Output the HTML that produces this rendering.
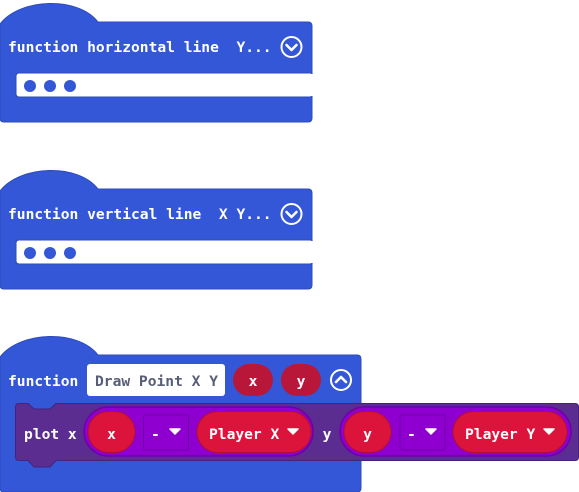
<!DOCTYPE html>
<html><head><meta charset="utf-8"><style>
html,body{margin:0;padding:0;background:#fff;width:579px;height:492px;overflow:hidden}
svg text{font-family:"DejaVu Sans Mono","Liberation Mono",monospace;font-weight:bold;font-size:14.6px;white-space:pre}
</style></head><body>
<svg width="579" height="492" viewBox="0 0 579 492" xmlns="http://www.w3.org/2000/svg" xml:space="preserve">
<path d="M0,24 C20,-2 78,-4 98,22 L308,22 Q312,22 312,26 L312,118 Q312,122 308,122 L4,122 Q0,122 0,118 Z" fill="#3357d6" stroke="#2c4bb9" stroke-width="1"/>
<rect x="16" y="73" width="297" height="24" rx="3" fill="#fff" stroke="#2c4bb9" stroke-width="1"/>
<rect x="305" y="74" width="9" height="22" fill="#fff"/>
<circle cx="30" cy="86" r="6" fill="#3357d6"/><circle cx="50" cy="86" r="6" fill="#3357d6"/><circle cx="70" cy="86" r="6" fill="#3357d6"/>
<text x="8" y="52" fill="#fff">function horizontal line  Y...</text>
<circle cx="291.5" cy="47" r="10" fill="none" stroke="#fff" stroke-width="2"/>
<path d="M286.5,45 L291.5,50 L296.5,45" fill="none" stroke="#fff" stroke-width="2.6" stroke-linecap="round" stroke-linejoin="round"/>

<path d="M0,191 C20,165 78,163 98,189 L308,189 Q312,189 312,193 L312,285 Q312,289 308,289 L4,289 Q0,289 0,285 Z" fill="#3357d6" stroke="#2c4bb9" stroke-width="1"/>
<rect x="16" y="240" width="297" height="24" rx="3" fill="#fff" stroke="#2c4bb9" stroke-width="1"/>
<rect x="305" y="241" width="9" height="22" fill="#fff"/>
<circle cx="30" cy="253" r="6" fill="#3357d6"/><circle cx="50" cy="253" r="6" fill="#3357d6"/><circle cx="70" cy="253" r="6" fill="#3357d6"/>
<text x="8" y="219" fill="#fff">function vertical line  X Y...</text>
<circle cx="291.5" cy="214" r="10" fill="none" stroke="#fff" stroke-width="2"/>
<path d="M286.5,212 L291.5,217 L296.5,212" fill="none" stroke="#fff" stroke-width="2.6" stroke-linecap="round" stroke-linejoin="round"/>

<path d="M0,357 C20,331 78,329 98,355 L357,355 Q361,355 361,359 L361,488 Q361,492 357,492 L4,492 Q0,492 0,488 Z" fill="#3357d6" stroke="#2c4bb9" stroke-width="1"/>
<text x="8" y="386" fill="#fff">function</text>
<rect x="87" y="364" width="138" height="32" rx="3" fill="#fff"/>
<text x="95" y="386" fill="#575e75">Draw Point X Y</text>
<rect x="233" y="364" width="40" height="32" rx="16" fill="#b8173a"/>
<text x="253" y="386" fill="#fff" text-anchor="middle">x</text>
<rect x="281" y="364" width="40" height="32" rx="16" fill="#b8173a"/>
<text x="301" y="386" fill="#fff" text-anchor="middle">y</text>
<circle cx="341" cy="380" r="10" fill="none" stroke="#fff" stroke-width="2"/>
<path d="M336,382 L341,377 L346,382" fill="none" stroke="#fff" stroke-width="2.6" stroke-linecap="round" stroke-linejoin="round"/>

<path d="M19,403.5 L28,403.5 L34,409 L50,409 L56,403.5 L575,403.5 Q578.5,403.5 578.5,407 L578.5,457 Q578.5,460.5 575,460.5 L56,460.5 L50,467 L34,467 L28,460.5 L19,460.5 Q15.5,460.5 15.5,457 L15.5,407 Q15.5,403.5 19,403.5 Z" fill="#5c2d91" stroke="#47227a" stroke-width="1"/>
<text x="24" y="439" fill="#fff">plot x</text>

<rect x="84" y="407" width="229" height="49" rx="24.5" fill="#8f00d0" stroke="#6d00a5" stroke-width="1.5"/>
<rect x="88" y="411.5" width="47" height="41" rx="20.5" fill="#dc143c" stroke="#b0102f" stroke-width="1"/>
<text x="111.5" y="439" fill="#fff" text-anchor="middle">x</text>
<rect x="143.5" y="415" width="45" height="35" rx="2" fill="#8f00d0" stroke="#6d00a5" stroke-width="1"/>
<text x="151" y="439" fill="#fff">-</text>
<path d="M170,429 L180,429 L175,434 Z" fill="#fff" stroke="#fff" stroke-width="1.5" stroke-linejoin="round"/>
<rect x="197" y="411.5" width="114" height="41" rx="20.5" fill="#dc143c" stroke="#b0102f" stroke-width="1"/>
<text x="209" y="439" fill="#fff">Player X</text>
<path d="M288,429 L298,429 L293,434 Z" fill="#fff" stroke="#fff" stroke-width="1.5" stroke-linejoin="round"/>

<text x="327" y="439" fill="#fff" text-anchor="middle">y</text>

<rect x="340" y="407" width="231" height="49" rx="24.5" fill="#8f00d0" stroke="#6d00a5" stroke-width="1.5"/>
<rect x="344" y="411.5" width="47" height="41" rx="20.5" fill="#dc143c" stroke="#b0102f" stroke-width="1"/>
<text x="367.5" y="439" fill="#fff" text-anchor="middle">y</text>
<rect x="400" y="415" width="45" height="35" rx="2" fill="#8f00d0" stroke="#6d00a5" stroke-width="1"/>
<text x="407" y="439" fill="#fff">-</text>
<path d="M426,429 L436,429 L431,434 Z" fill="#fff" stroke="#fff" stroke-width="1.5" stroke-linejoin="round"/>
<rect x="453" y="411.5" width="114" height="41" rx="20.5" fill="#dc143c" stroke="#b0102f" stroke-width="1"/>
<text x="465" y="439" fill="#fff">Player Y</text>
<path d="M544,429 L554,429 L549,434 Z" fill="#fff" stroke="#fff" stroke-width="1.5" stroke-linejoin="round"/>
</svg>
</body></html>
